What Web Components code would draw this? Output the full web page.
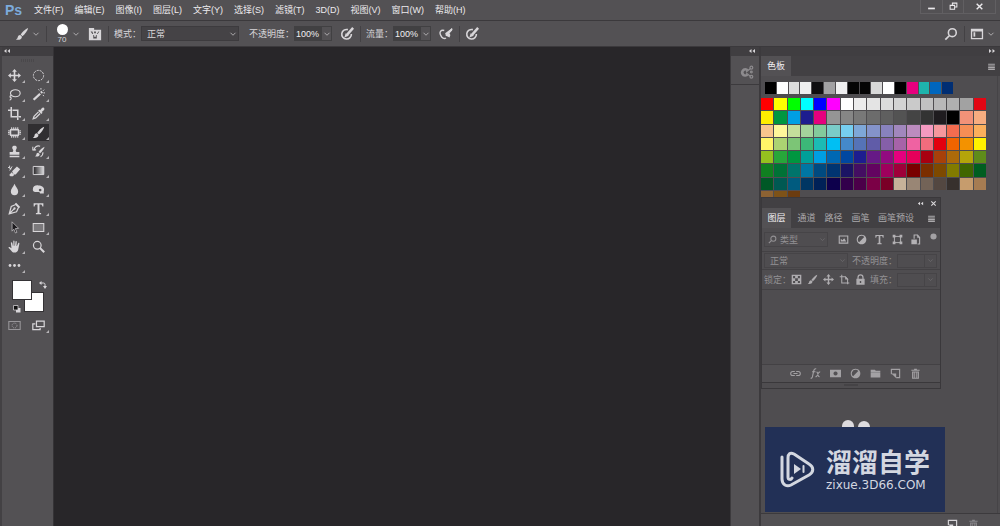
<!DOCTYPE html>
<html lang="zh-CN">
<head>
<meta charset="utf-8">
<title>Ps</title>
<style>
    html, body {
        height: 100%;
        margin: 0;
    }
    body {
        overflow: hidden;
        background: #535154;
        color: #d8d6d9;
        font: 9px/12px "Liberation Sans", "Noto Sans CJK SC", sans-serif;
    }
</style>
</head>
<body>
<ps-workspace></ps-workspace>

<script>
// 16x16 glyphs, painted with currentColor
const ICONS = {
    chevron: '<path d="M3 5.500l5 5 5-5" fill="none" stroke="currentColor" stroke-width="1.800"/>',
    left: '<path d="M7 4v8L2 8zM14 4v8L9 8z"/>',
    right: '<path d="M2 4v8l5-4zM9 4v8l5-4z"/>',
    menu: '<path d="M2 3h12v2H2zM2 6h12v2H2zM2 9h12v2H2zM2 12h12v2H2z"/>',
    close: '<path d="M3 3l10 10M13 3L3 13" stroke="currentColor" stroke-width="2.500"/>',
    minimize: '<path d="M2 10h12v3H2z"/>',
    restore: '<path d="M6 6V2h8v7h-4M2 6h8v7H2z" fill="none" stroke="currentColor" stroke-width="1.800"/>',
    brush: '<path d="M15 1c-3 1-7 5-8.500 7.500l2 2C11 8.500 14.500 4 15 1zM6 9c-2 0-2.800 1.500-3 3-.2 1.200-1 2-2 2 2 1.200 6.500 1 7-3z"/>',
    brushPanel: '<path fill-rule="evenodd" d="M1 3V1h6v2h8v12H1zM3 5l2 3h1L5 5zm4 0v2h2V5zm5 0l-2 3h1l2-3zM6 9v4h4V9H9v2H7V9z"/>',
    pressure: '<g fill="none" stroke="currentColor"><path d="M9 3a5.500 5.500 0 1 0 4 5" stroke-width="1.800"/><path d="M8 9l7-8" stroke-width="2.800"/></g><path d="M5 12l1.500-5 3.500 3z"/>',
    airbrush: '<path d="M6 4C2 3 0 6 2 9.500c1 3 4 4.500 6 3M8 10l7-8" fill="none" stroke="currentColor" stroke-width="1.600"/><path d="M15 1L7 7l1 3 4 2 1-3-1-2 3-3z"/>',
    search: '<circle cx="9.500" cy="6.500" r="4.500" fill="none" stroke="currentColor" stroke-width="1.800"/><path d="M6 10l-4.500 4.500" stroke="currentColor" stroke-width="2"/>',
    layout: '<path fill-rule="evenodd" d="M1 2h14v12H1zm1.500 3v7.500h11V5z"/><path d="M4 6h2v5H4z"/>',
    move: '<path d="M8 0l3 3.500H9V7h3.500V5L16 8l-3.500 3V9H9v3.500h2L8 16l-3-3.500h2V9H3.500v2L0 8l3.500-3v2H7V3.500H5z"/>',
    ellipse: '<circle cx="8" cy="8" r="6.300" fill="none" stroke="currentColor" stroke-width="1.200" stroke-dasharray="2.600 1.200"/>',
    lasso: '<g fill="none" stroke="currentColor" stroke-width="1.400"><ellipse cx="9" cy="6.500" rx="6" ry="4.300"/><path d="M4 9c-2 .5-2 3 0 2.500M3.500 11.500c1 1.500 0 3-1.500 3.500"/></g>',
    wand: '<path d="M1 13.500L9 6l2 2-8 7.500zM10 5l1.500-1.500 2 2L12 7z"/><path d="M11 0v2M15 2l-1.500 1.500M16 6h-2M8 1.500l1 1.500M14.500 10l-1-1.500" stroke="currentColor" stroke-width="1.200"/>',
    crop: '<path d="M4 0v12h8M0 4h3M5.500 4H12v8M12 13v3M13 12h3" fill="none" stroke="currentColor" stroke-width="1.900"/>',
    eyedropper: '<path d="M9 3l1 1 2-2.500c2-2 4.500.5 2.500 2.500L12 6l1 1-1.500 1.500-4-4z"/><path d="M8 6l-5.500 5.500-1 3 3-1L10 8" fill="none" stroke="currentColor" stroke-width="1.600"/>',
    patch: '<path fill-rule="evenodd" d="M4 3.500h8q2 0 2 2v5q0 2-2 2H4q-2 0-2-2v-5q0-2 2-2zm0 2v5h8v-5z"/><path d="M4.500 1.500V4M7 1.500V4m2.500-2.500V4M12 1.500V4M4.500 12v2.500M7 12v2.500m2.500-2.500v2.500M12 12v2.500M0 6h2M0 8h2m-2 2h2M14 6h2m-2 2h2m-2 2h2" stroke="currentColor" stroke-width="1.200"/>',
    stamp: '<path d="M8 1c3 0 3.500 2.500 2 4.500-.8 1-.6 2.500.5 3H14V12H2V8.500h3.500c1.100-.5 1.300-2 .5-3C4.500 3.500 5 1 8 1zM2 13.300h12V15H2z"/>',
    history: '<path d="M15.500 2c-3 1-6 4-7.500 6.500l2 1.500c2-2 5-5 5.500-8zM7.500 9.500c-1.500 0-2 1-2.200 2.500-.3 1-1 1.500-1.800 1.500 2 1.200 6 1 6-2.500z"/><path d="M10 1.500C6 0 2.500 3 2.500 7M1 2v4h4M13.500 9c0 3-1 4.500-3 5.500" fill="none" stroke="currentColor" stroke-width="1.300"/>',
    eraser: '<path d="M5 9l6-6 4 3.500L9.500 13H7zM4.500 10l3 3.500L6 15H3l-1.500-1.500z"/><path d="M2 2v3M0 4l4 2M5 3L2 8" stroke="currentColor" stroke-width="1.200"/>',
    gradient: '<defs><linearGradient id="g"><stop offset="0" stop-color="#222023"/><stop offset="1" stop-color="#dedee0"/></linearGradient></defs><path d="M1.500 3h13v10h-13z" fill="url(#g)" stroke="currentColor" stroke-width="1.200"/>',
    blur: '<path d="M8 1c1.500 4 4.500 6 4.500 9.500a4.500 4.500 0 0 1-9 0C3.500 7 6.500 5 8 1z"/>',
    sponge: '<path fill-rule="evenodd" d="M1 8c0-4 3-5.500 7-5 5 0 8 3 6.500 7v3H10l-1-2H4c-2 0-3-1-3-3zm9-1a1.600 1.600 0 1 0 .1 0z"/>',
    pen: '<path d="M9.500 3L4 5.500 1.500 14.500l9-2.500L13 6.500zM1.500 14.500L7.500 8.500" fill="none" stroke="currentColor" stroke-width="1.500"/><circle cx="8" cy="8" r="1.400"/><path d="M10 1l5 5-1.500 1.300-5-5z"/>',
    type: '<path d="M2 1.500h12V5.500h-1.200C12.400 3.600 12 3 10.600 3H9.200v9.500c0 .8.600 1 2 1V15H4.800v-1.500c1.400 0 2-.2 2-1V3H5.400C4 3 3.600 3.600 3.200 5.500H2z"/>',
    select: '<path d="M5 1l8 8-4 .3 2 4.700-1.800.8-2-4.700L5 12.500z" fill="#1c1a1d" stroke="currentColor" stroke-width=".8"/>',
    shape: '<path d="M1.500 3h13v10h-13z" fill="#7b797c" stroke="currentColor" stroke-width="1.300"/>',
    hand: '<path d="M3.500 3.500c0-1 1.500-1 1.700 0L6 7h.5V1.500c0-1 1.500-1 1.500 0V7h.6l.6-5c0-1 1.600-1 1.600 0L10.500 7.500h.5l1.500-3.500c.5-1 1.800-.5 1.500.5L12.500 12c-.5 2-2 3.500-4.500 3.500S5 14.500 3 12L.5 9.500c0-1 1.500-1.200 2.300-.3L4.300 10z"/>',
    zoom: '<circle cx="6.500" cy="6.500" r="4.700" fill="none" stroke="currentColor" stroke-width="1.500"/><path d="M10 10l5 5" stroke="currentColor" stroke-width="2.600"/>',
    more: '<circle cx="2.500" cy="8" r="1.700"/><circle cx="8" cy="8" r="1.700"/><circle cx="13.500" cy="8" r="1.700"/>',
    swap: '<path d="M4 4h5q3 0 3 3v4" fill="none" stroke="currentColor" stroke-width="2"/><path d="M5 0v8L0 4zM8 10h8l-4 6z"/>',
    defaults: '<path d="M6 6h9v9H6z"/><path d="M1 1h9v9H1z" fill="#111" stroke="currentColor" stroke-width="1.500"/>',
    mask: '<path d="M1 3h14v10H1z" fill="none" stroke="#98969a" stroke-width="1.300"/><circle cx="8" cy="8" r="3" fill="none" stroke="#98969a" stroke-width="1.200" stroke-dasharray="1.500 1"/>',
    screen: '<path d="M5.500 2.500h9.500v7H5.500zM4 6H1v7h9v-2" fill="none" stroke="currentColor" stroke-width="1.500"/>',
    nodes: '<path fill-rule="evenodd" d="M6 3.500a5 5 0 1 0 4 8L7.500 10a2 2 0 1 1 0-3L10 5.500a5 5 0 0 0-4-2z"/><g fill="none" stroke="currentColor" stroke-width="1.400"><path d="M7 8l5-4M7 9l5 4"/><circle cx="13" cy="3" r="1.600"/><circle cx="13" cy="13.500" r="1.600"/><circle cx="13" cy="8" r="1"/></g>',
    image: '<path fill-rule="evenodd" d="M1 2h14v12H1zm1.600 1.600v8.800h10.800V3.600z"/><path d="M4 11V7l2.500 2L9 6l3 5z"/>',
    adjust: '<path fill-rule="evenodd" d="M8 1a7 7 0 1 0 .1 0zM12 4.500L4.500 12A5.300 5.300 0 0 1 8 2.700c1.500 0 3 .8 4 1.800z"/>',
    frame: '<path d="M3.500 3.500h9v9h-9z" fill="none" stroke="currentColor" stroke-width="1.400"/><path d="M1 1h4v4H1zM11 1h4v4h-4zM1 11h4v4H1zM11 11h4v4h-4z"/>',
    smart: '<path d="M6 7V1.500h5L14 5v9.500h-3" fill="none" stroke="currentColor" stroke-width="1.600"/><path d="M2 8h8v7H2zM10.500 1v4.500H14z"/>',
    dot: '<circle cx="8" cy="8" r="7"/>',
    checker: '<path fill-rule="evenodd" d="M1 1h14v14H1zm2 2v3h3V3zm7 0v3h3V3zM6 6v4h4V6zm-3 4v3h3v-3zm7 0v3h3v-3z"/>',
    artboard: '<path d="M4 1v12h11M1 4h8l3.500 3.500V15" fill="none" stroke="currentColor" stroke-width="1.500"/><path d="M9 3v5h5z"/>',
    lock: '<path fill-rule="evenodd" d="M2 7h1.500V5a4.500 4.500 0 0 1 9 0v2H14v8.500H2zm3.300 0h5.400V5a2.700 2.700 0 0 0-5.400 0zM7 10v3h2v-3z"/>',
    link: '<path d="M7 5H4a3 3 0 0 0 0 6h3M9 5h3a3 3 0 0 1 0 6H9M5 8h6" fill="none" stroke="currentColor" stroke-width="1.500"/>',
    fx: '<path d="M9 1.500C7 .5 6 2 5.500 4L3.500 13c-.4 1.500-1.300 2-2.500 1.500M3 5.500h5M8 12.500c1 .5 1.500 0 2-1l2.500-4.500c.5-1 1.200-1.400 2.300-1M9.500 6c1 0 1.300.5 1.600 1.500l.8 3.500c.3 1.200.8 1.600 2 1.500" fill="none" stroke="currentColor" stroke-width="1.600"/>',
    addMask: '<path fill-rule="evenodd" d="M0 2.500h16v11H0zM8 5a3 3 0 1 0 .1 0z"/>',
    folder: '<path d="M1 2.500h6L8.500 4H15v2H1zM1 6.700h14v7H1z"/>',
    page: '<path d="M2 9V2h12v12H9" fill="none" stroke="currentColor" stroke-width="1.700"/><path d="M2 8h7v7z"/>',
    trash: '<path fill-rule="evenodd" d="M6 1h4v1.500h4V4H2V2.500h4zM3 5h10v10.500H3zm2 1.500V14h1.200V6.500zm2.400 0V14h1.200V6.500zm2.400 0V14H11V6.500z"/>'
};

// shared resets for native controls
const CONTROLS = `
    * { box-sizing: border-box; }
    button, input, select {
        margin: 0;
        padding: 0;
        border: 0;
        border-radius: 0;
        background: none;
        color: inherit;
        font: inherit;
    }
    button { display: flex; align-items: center; justify-content: center; }
    select { appearance: none; }
`;

class PsIcon extends HTMLElement {
    constructor() {
        super();
        this.attachShadow({ mode: 'open' });
    }

    connectedCallback() {
        this.shadowRoot.innerHTML = `
        <style>
            :host { display: block; width: 12px; height: 12px; flex: none; }
            svg { display: block; width: 100%; height: 100%; fill: currentColor; }
        </style>
        <svg viewBox="0 0 16 16" aria-hidden="true">${ICONS[this.getAttribute('name')]}</svg>`;
    }
}

class MenuBar extends HTMLElement {
    constructor() {
        super();
        this.attachShadow({ mode: 'open' });
    }

    connectedCallback() {
        const items = ['文件(F)', '编辑(E)', '图像(I)', '图层(L)', '文字(Y)', '选择(S)', '滤镜(T)', '3D(D)', '视图(V)', '窗口(W)', '帮助(H)'];
        this.shadowRoot.innerHTML = `
        <style>
            ${CONTROLS}
            :host { display: flex; justify-content: space-between; height: 20px; border-bottom: 1px solid #3b393c; flex: none; box-sizing: content-box; }
            nav { display: flex; align-items: center; gap: 11px; padding-left: 5px; }
            .logo { width: 18px; color: #7cabdc; font: bold 14px/20px "Liberation Sans", sans-serif; }
            button { color: #eceaed; white-space: nowrap; }
            .win { display: flex; height: 14px; border: 1px solid #615f62; border-top: 0; margin-right: 4px; }
            .win button { width: 21px; }
            .win button + button { border-left: 1px solid #615f62; }
            .win button:last-child { width: 32px; }
            ps-icon { width: 9px; height: 9px; }
        </style>
        <nav>
            <span class="logo">Ps</span>
            ${items.map(t => `<button>${t}</button>`).join('')}
        </nav>
        <div class="win">
            <button aria-label="最小化"><ps-icon name="minimize"></ps-icon></button>
            <button aria-label="还原"><ps-icon name="restore"></ps-icon></button>
            <button aria-label="关闭"><ps-icon name="close"></ps-icon></button>
        </div>`;
    }
}

class OptionsBar extends HTMLElement {
    constructor() {
        super();
        this.attachShadow({ mode: 'open' });
    }

    connectedCallback() {
        this.shadowRoot.innerHTML = `
        <style>
            ${CONTROLS}
            :host { display: flex; align-items: center; justify-content: space-between; height: 25px; flex: none; padding: 0 5px 0 15px; }
            div { display: flex; align-items: center; }
            hr { width: 1px; height: 16px; margin: 0 5px 0 6px; border: 0; background: #434144; }
            ps-icon { width: 14px; height: 14px; }
            .arrow { width: 8px; height: 8px; color: #b5b3b6; }
            .tool { gap: 3px; }
            .tip { flex-direction: column; width: 20px; font-size: 8px; line-height: 9px; }
            .tip i { width: 11px; height: 11px; border-radius: 50%; background: #fff; }
            .panel { margin-left: 8px; }
            label { white-space: nowrap; }
            .mode { display: grid; margin-right: 10px; }
            .mode > * { grid-area: 1 / 1; }
            .mode .arrow { justify-self: end; align-self: center; margin-right: 2px; pointer-events: none; }
            select { width: 98px; height: 15px; padding-left: 5px; background: #454346; border: 1px solid #3d3b3e; }
            input { width: 27px; height: 15px; padding-left: 2px; background: #414042; color: #f0eef1; }
            .drop { width: 11px; height: 15px; border: 1px solid #414042; margin-right: 8px; }
        </style>
        <div>
            <button class="tool" aria-label="画笔工具"><ps-icon name="brush"></ps-icon><ps-icon class="arrow" name="chevron"></ps-icon></button>
            <hr>
            <button class="tip"><i></i>70</button>
            <ps-icon class="arrow" name="chevron"></ps-icon>
            <button class="panel" aria-label="画笔面板"><ps-icon name="brushPanel"></ps-icon></button>
            <hr>
            <label for="mode">模式：</label>
            <div class="mode">
                <select id="mode"><option>正常</option></select>
                <ps-icon class="arrow" name="chevron"></ps-icon>
            </div>
            <label for="opacity">不透明度：</label>
            <input id="opacity" value="100%">
            <button class="drop" aria-label="不透明度选项"><ps-icon class="arrow" name="chevron"></ps-icon></button>
            <button aria-label="压力不透明度"><ps-icon name="pressure"></ps-icon></button>
            <hr>
            <label for="flow">流量：</label>
            <input id="flow" value="100%">
            <button class="drop" aria-label="流量选项"><ps-icon class="arrow" name="chevron"></ps-icon></button>
            <button aria-label="喷枪"><ps-icon name="airbrush"></ps-icon></button>
            <hr>
            <button aria-label="压力大小"><ps-icon name="pressure"></ps-icon></button>
        </div>
        <div>
            <button aria-label="搜索"><ps-icon name="search"></ps-icon></button>
            <hr>
            <button class="tool" aria-label="工作区"><ps-icon name="layout"></ps-icon><ps-icon class="arrow" name="chevron"></ps-icon></button>
        </div>`;
    }
}

class ToolPanel extends HTMLElement {
    constructor() {
        super();
        this.attachShadow({ mode: 'open' });
    }

    connectedCallback() {
        const tools = [
            'move', 'ellipse', 'lasso', 'wand', 'crop', 'eyedropper', 'patch', 'brush', 'stamp', 'history', 'eraser',
            'gradient', 'blur', 'sponge', 'pen', 'type', 'select', 'shape', 'hand', 'zoom', 'more'
        ];
        const single = ['zoom'];
        this.shadowRoot.innerHTML = `
        <style>
            ${CONTROLS}
            :host { display: block; width: 54px; flex: none; border-left: 2px solid #434144; border-right: 1px solid #353336; box-sizing: border-box; }
            header { height: 9px; padding-left: 1px; background: #403e41; }
            header ps-icon { width: 8px; height: 8px; }
            .grip { width: 14px; height: 3px; margin: 3px auto 4px; background: repeating-linear-gradient(90deg, #4a484b 0 1px, transparent 1px 2px); }
            .tools, .modes { display: grid; grid-template-columns: 24px 24px; }
            button { height: 19px; position: relative; }
            .more::after { content: ""; position: absolute; right: 1px; bottom: 2px; border-left: 3px solid transparent; border-bottom: 3px solid #b5b3b6; }
            .on { background: #302e31; background-clip: padding-box; border: solid transparent; border-width: 1px 1px 1px 2px; }
            .on.more::after { right: 0; bottom: 1px; }
            ps-icon { width: 13px; height: 13px; }
            .colors { display: grid; grid-template-columns: repeat(4, 9px); grid-template-rows: 6px 6px 6px 12px; width: max-content; margin: 5px 0 0 10px; }
            .colors button { width: 20px; height: 20px; border: 1px solid #353336; background: #fff; }
            .front { grid-area: 1 / 1; z-index: 1; }
            .back { grid-area: 3 / 2; margin-left: 3px; }
            .colors .swap { grid-area: 1 / 4; width: 9px; height: 9px; margin-left: -4px; border: 0; background: none; }
            .colors .swap { margin-left: 0; justify-self: end; justify-content: flex-start; }
            .colors .reset { grid-area: 4 / 1; width: 9px; height: 9px; margin-top: 6px; border: 0; background: none; }
            .colors ps-icon { width: 8px; height: 8px; }
            .modes { margin-top: 6px; }
        </style>
        <header><ps-icon name="left"></ps-icon></header>
        <div class="grip"></div>
        <div class="tools">
            ${tools.map(t => `<button aria-label="${t}" class="${single.includes(t) ? '' : 'more'} ${t === 'brush' ? 'on' : ''}"><ps-icon name="${t}"></ps-icon></button>`).join('')}
        </div>
        <div class="colors">
            <button class="front" aria-label="前景色"></button>
            <button class="back" aria-label="背景色"></button>
            <button class="swap" aria-label="切换颜色"><ps-icon name="swap"></ps-icon></button>
            <button class="reset" aria-label="默认颜色"><ps-icon name="defaults"></ps-icon></button>
        </div>
        <div class="modes">
            <button aria-label="快速蒙版"><ps-icon name="mask"></ps-icon></button>
            <button class="more" aria-label="屏幕模式"><ps-icon name="screen"></ps-icon></button>
        </div>`;
    }
}

class IconDock extends HTMLElement {
    constructor() {
        super();
        this.attachShadow({ mode: 'open' });
    }

    connectedCallback() {
        this.shadowRoot.innerHTML = `
        <style>
            ${CONTROLS}
            :host { display: block; width: 31px; flex: none; border: solid #3c3a3d; border-width: 0 2px 0 1px; box-sizing: border-box; background: #535154; }
            header { display: flex; justify-content: flex-end; height: 9px; padding-right: 3px; background: #403e41; }
            header ps-icon { width: 8px; height: 8px; }
            .group { padding: 8px 0 4px 4px; border-bottom: 1px solid #3c3a3d; color: #8d8b8e; }
            button { width: 100%; height: 16px; }
            button ps-icon { width: 14px; height: 14px; }
        </style>
        <header><ps-icon name="left"></ps-icon></header>
        <div class="group"><button aria-label="面板"><ps-icon name="nodes"></ps-icon></button></div>`;
    }
}

class SwatchesPanel extends HTMLElement {
    constructor() {
        super();
        this.attachShadow({ mode: 'open' });
    }

    connectedCallback() {
        const recent = '000 fff ddd eee 0f0e10 a2a1a3 efeff0 050505 050505 d8d8d8 fff 000 e6007e 1eb4ac 0066bd 002e73';
        const swatches = `
            f00 ff0 0f0 0ff 00f f0f fff ececec e4e4e4 dcdcdc d3d3d3 cacaca c1c1c1 b8b8b8 b0b0b0 a2a2a2 e30613
            ffed00 009640 009fe3 1d1d8f e6007e 959595 868686 787878 6c6c6c 5f5f5f 535353 444 333 1f1c1f 000 f29278 f7ad80
            f9c58d fff79a c4df9b a3d39c 83ca9c 7accc8 76cef0 7ea7d8 8493ca 8882be a187bd bc8cbf f49ac1 f5989d f26c4f f68e55 fbaf5c
            fff568 acd372 7cc576 3cb878 1cbbb4 00bff3 4489ca 5573b7 605ca8 855fa8 a763a8 ef62a2 f16c7d e3000f f06400 f39200 fff200
            95c11f 27a63a 009640 00a099 009fe3 0068b3 0047a0 1d1d8f 661a86 920a80 e6007e e6005a a80010 a8400a ad6a0a b4a40a 5f8c1a
            108020 007236 00746b 0076a3 004a80 003471 1b1464 440e62 630460 9e005d 9e0039 790000 7b2e00 7d4900 827b00 406600 005e20
            005826 005952 005b7f 003663 002157 0d004c 32004b 4b0049 7b0046 7a0026 c7b299 998675 736357 534741 37302d c69c6d a67c52
            8c6233 7d5218 6b3c10`;
        const cells = list => list.trim().split(/\s+/).map(c => `<button aria-label="#${c}" style="background:#${c}"></button>`).join('');
        this.shadowRoot.innerHTML = `
        <style>
            ${CONTROLS}
            :host { display: flex; flex-direction: column; width: 239px; flex: none; background: #4f4d50; }
            header { display: flex; justify-content: flex-end; height: 9px; flex: none; padding-right: 4px; background: #403e41; }
            header ps-icon { width: 8px; height: 8px; }
            .tabs { display: flex; align-items: center; justify-content: space-between; height: 20px; flex: none; padding-right: 4px; background: #424043; }
            .tab { width: 30px; height: 20px; background: #535154; color: #f0eef1; }
            .tabs ps-icon { width: 9px; height: 9px; color: #a9a7aa; }
            .recent, .grid { display: grid; gap: 1px; width: max-content; }
            .recent { grid-template-columns: repeat(16, 1fr); width: 188px; height: 12px; margin: 6px 0 4px 4px; }
            .grid { grid-template-columns: repeat(17, 1fr); grid-template-rows: repeat(8, 1fr); width: 225px; height: 105px; }
            main { flex: 1; min-height: 0; margin-right: 2px; border-right: 1px solid #464447; }
            footer { display: flex; gap: 10px; justify-content: flex-end; height: 13px; padding: 5px 21px 0 0; overflow: hidden; border-top: 1px solid #3c3a3d; background: #535154; }
            footer ps-icon { width: 11px; height: 11px; }
            .off { color: #88868a; }
        </style>
        <header><ps-icon name="right"></ps-icon></header>
        <div class="tabs"><button class="tab">色板</button><button aria-label="面板菜单"><ps-icon name="menu"></ps-icon></button></div>
        <main>
            <div class="recent">${cells(recent)}</div>
            <div class="grid">${cells(swatches)}</div>
        </main>
        <footer><ps-icon name="page"></ps-icon><ps-icon class="off" name="trash"></ps-icon></footer>`;
    }
}

class LayersPanel extends HTMLElement {
    constructor() {
        super();
        this.attachShadow({ mode: 'open' });
    }

    connectedCallback() {
        const icons = names => names.map(n => `<button aria-label="${n}"><ps-icon name="${n}"></ps-icon></button>`).join('');
        this.shadowRoot.innerHTML = `
        <style>
            ${CONTROLS}
            :host { display: block; box-sizing: border-box; border: 1px solid #3a383b; background: #4f4d50; color: #939194; }
            header { display: flex; justify-content: flex-end; align-items: center; gap: 6px; height: 10px; padding-right: 3px; background: #424043; color: #dcdadd; }
            header ps-icon { width: 7px; height: 7px; }
            .tabs { display: flex; align-items: center; height: 20px; padding-right: 4px; background: #424043; color: #aba9ac; }
            .tabs button { width: 27px; height: 20px; white-space: nowrap; }
            .tabs .on { width: 29px; margin-right: 2px; background: #535154; color: #f4f2f5; }
            .tabs .wide { width: 36px; margin: 0 auto 0 4px; }
            .tabs .list { width: 9px; }
            .row { display: flex; align-items: center; height: 18px; padding: 0 3px 0 2px; border-bottom: 1px solid #434144; }
            .filter { height: 24px; }
            .lock { height: 20px; }
            .icons { display: flex; gap: 5px; }
            ps-icon { width: 11px; height: 11px; }
            .list ps-icon { width: 9px; height: 9px; }
            .pick { display: grid; }
            .pick > * { grid-area: 1 / 1; align-self: center; }
            .pick ps-icon { pointer-events: none; }
            ps-icon.arrow { justify-self: end; width: 7px; height: 7px; margin-right: 2px; color: #6d6b6e; }
            ps-icon.find { width: 9px; height: 9px; margin-left: 4px; }
            select { width: 84px; height: 15px; padding-left: 5px; border: 1px solid #464447; }
            .filter select { width: 64px; padding-left: 15px; }
            .filter .icons { margin-left: 10px; gap: 7px; color: #b3b1b4; }
            .dot { margin: 0 0 6px auto; }
            .dot ps-icon { width: 7px; height: 7px; color: #a3a1a4; }
            label, span { white-space: nowrap; }
            .value { display: flex; margin-left: auto; }
            input { width: 28px; height: 14px; border: 1px solid #464447; }
            .value button { width: 12px; height: 14px; border: 1px solid #464447; border-left: 0; }
            .value .arrow { margin: 0; }
            .op { margin-left: 4px; }
            .lock .icons { margin-right: 4px; color: #aeacaf; }
            .list-area { height: 75px; border-bottom: 1px solid #434144; }
            footer { display: flex; align-items: center; justify-content: center; gap: 9px; height: 18px; padding-left: 8px; border-bottom: 1px solid #3a383b; background: #535154; color: #a3a1a4; }
            .grip { width: 14px; height: 2px; margin: 1px auto 2px; background: #454346; }
        </style>
        <header><ps-icon name="left"></ps-icon><ps-icon name="close"></ps-icon></header>
        <div class="tabs">
            <button class="on">图层</button><button>通道</button><button>路径</button><button>画笔</button><button class="wide">画笔预设</button>
            <button class="list" aria-label="面板菜单"><ps-icon name="menu"></ps-icon></button>
        </div>
        <div class="row filter">
            <div class="pick"><select aria-label="滤镜类型"><option>类型</option></select><ps-icon class="find" name="search"></ps-icon><ps-icon class="arrow" name="chevron"></ps-icon></div>
            <div class="icons">${icons(['image', 'adjust', 'type', 'frame', 'smart'])}</div>
            <button class="dot" aria-label="滤镜开关"><ps-icon name="dot"></ps-icon></button>
        </div>
        <div class="row">
            <div class="pick"><select aria-label="混合模式"><option>正常</option></select><ps-icon class="arrow" name="chevron"></ps-icon></div>
            <label class="op" for="op">不透明度：</label>
            <div class="value"><input id="op"><button aria-label="不透明度选项"><ps-icon class="arrow" name="chevron"></ps-icon></button></div>
        </div>
        <div class="row lock">
            <span>锁定：</span>
            <div class="icons">${icons(['checker', 'brush', 'move', 'artboard', 'lock'])}</div>
            <label for="fill">填充：</label>
            <div class="value"><input id="fill"><button aria-label="填充选项"><ps-icon class="arrow" name="chevron"></ps-icon></button></div>
        </div>
        <div class="list-area"></div>
        <footer>${icons(['link', 'fx', 'addMask', 'adjust', 'folder', 'page', 'trash'])}</footer>
        <div class="grip"></div>`;
    }
}

class SiteBadge extends HTMLElement {
    constructor() {
        super();
        this.attachShadow({ mode: 'open' });
    }

    connectedCallback() {
        this.shadowRoot.innerHTML = `
        <style>
            :host { display: flex; align-items: center; gap: 11px; box-sizing: border-box; padding-left: 15px; background: #223056; color: #d3d7e0; }
            .mark { width: 35px; height: 37px; flex: none; }
            .ears { position: absolute; left: 76px; top: -7px; width: 30px; height: 7px; }
            .name { font: bold 26px/30px "Liberation Sans", "Noto Sans CJK SC", sans-serif; }
            .url { font: 12px/14px "DejaVu Sans", sans-serif; }
            .text { display: flex; flex-direction: column; white-space: nowrap; }
        </style>
        <svg class="ears" viewBox="0 0 30 7" fill="#dddbde"><circle cx="7" cy="6" r="6"/><circle cx="23" cy="7" r="6"/></svg>
        <svg class="mark" viewBox="0 0 35 37" fill="none" stroke="currentColor" stroke-width="3" stroke-linecap="round" stroke-linejoin="round">
            <path d="M2 6v22c0 6 5 8 9 6l18-10c5-3 5-8 0-11L14 3c-4-2-6 0-6 4v19c0 3 3 3 4 1"/>
            <path d="M14 13v10l7-5z" fill="currentColor" stroke="none"/><path d="M23.500 15v6" stroke-width="2"/>
        </svg>
        <div class="text"><span class="name">溜溜自学</span><span class="url">zixue.3D66.COM</span></div>`;
    }
}

class PsWorkspace extends HTMLElement {
    constructor() {
        super();
        this.attachShadow({ mode: 'open' });
    }

    connectedCallback() {
        this.shadowRoot.innerHTML = `
        <style>
            :host { display: flex; flex-direction: column; height: 100vh; position: relative; }
            .body { display: flex; flex: 1; min-height: 0; border-top: 1px solid #3b393c; box-sizing: border-box; }
            .canvas { flex: 1; background: #282629; }
            /* floating windows */
            layers-panel { position: absolute; top: 197px; right: 59px; width: 180px; }
            site-badge { position: absolute; top: 427px; right: 55px; width: 180px; height: 85px; }
        </style>
        <menu-bar></menu-bar>
        <options-bar></options-bar>
        <div class="body">
            <tool-panel></tool-panel>
            <div class="canvas"></div>
            <icon-dock></icon-dock>
            <swatches-panel></swatches-panel>
        </div>
        <layers-panel></layers-panel>
        <site-badge></site-badge>`;
    }
}

customElements.define('ps-icon', PsIcon);
customElements.define('menu-bar', MenuBar);
customElements.define('options-bar', OptionsBar);
customElements.define('tool-panel', ToolPanel);
customElements.define('icon-dock', IconDock);
customElements.define('swatches-panel', SwatchesPanel);
customElements.define('layers-panel', LayersPanel);
customElements.define('site-badge', SiteBadge);
customElements.define('ps-workspace', PsWorkspace);
</script>
</body>
</html>
